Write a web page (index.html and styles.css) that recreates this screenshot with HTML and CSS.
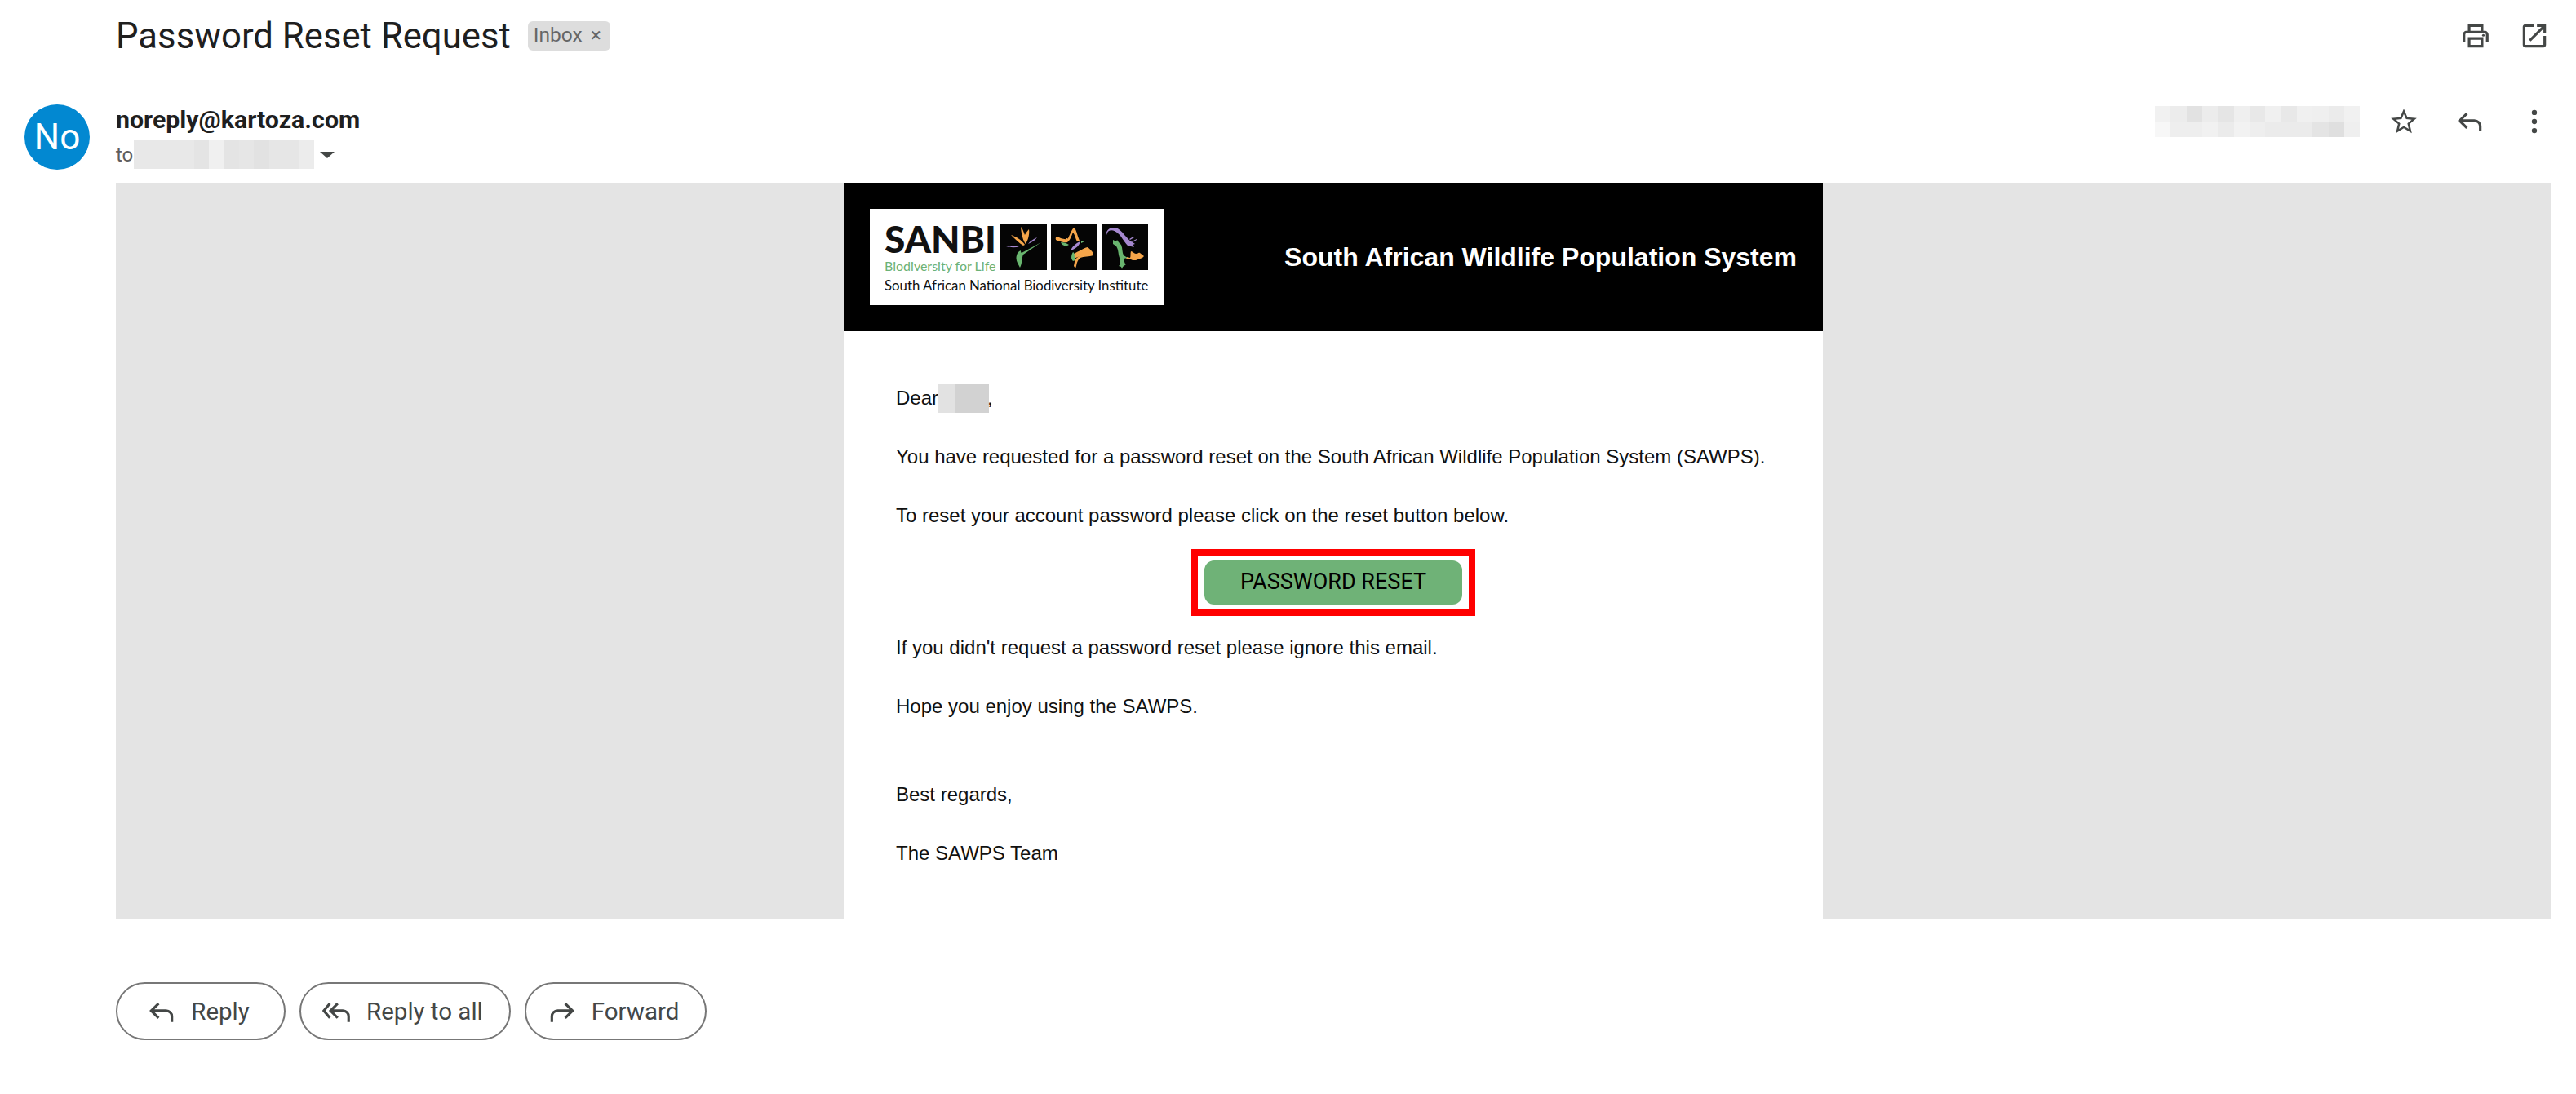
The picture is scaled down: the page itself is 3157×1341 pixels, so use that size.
FILE: index.html
```html
<!DOCTYPE html>
<html lang="en">
<head>
  <meta charset="utf-8">
  <title>Password Reset Request</title>
  <link rel="stylesheet" href="styles.css">
</head>
<body>
  <div class="page">
    <div class="subject">
      <h1>Password Reset Request</h1>
      <span class="chip">Inbox <span class="chip-x">×</span></span>
      <div class="subject-icons">
        <svg class="icon" viewBox="0 0 24 24"><path d="M19 8h-1V3H6v5H5c-1.66 0-3 1.34-3 3v6h4v4h12v-4h4v-6c0-1.66-1.34-3-3-3zM8 5h8v3H8V5zm8 14H8v-4h8v4zm2-2v-4H6v4H4v-6c0-.55.45-1 1-1h14c.55 0 1 .45 1 1v6h-2z"/><circle cx="18" cy="11.5" r="1"/></svg>
        <svg class="icon" viewBox="0 0 24 24"><path d="M19 19H5V5h7V3H5c-1.11 0-2 .9-2 2v14c0 1.1.89 2 2 2h14c1.1 0 2-.9 2-2v-7h-2v7zM14 3v2h3.59l-9.83 9.83 1.41 1.41L19 6.41V10h2V3h-7z"/></svg>
      </div>
    </div>

    <div class="message">
      <div class="avatar">No</div>
      <div class="message-main">
        <div class="sender-row">
          <div class="sender">
            <div class="sender-name">noreply@kartoza.com</div>
            <div class="sender-to">to<span class="blur-to"></span><span class="caret"></span></div>
          </div>
          <div class="sender-tools">
            <span class="blur-date"></span>
            <svg class="icon" viewBox="0 0 24 24"><path d="M22 9.24l-7.19-.62L12 2 9.19 8.63 2 9.24l5.46 4.73L5.82 21 12 17.27 18.18 21l-1.63-7.03L22 9.24zM12 15.4l-3.76 2.27 1-4.28-3.32-2.88 4.38-.38L12 6.1l1.71 4.04 4.38.38-3.32 2.88 1 4.28L12 15.4z"/></svg>
            <svg class="icon" viewBox="0 0 24 24"><path class="line" d="M9.7 5.7 4 11.3l5.7 5.6M4.6 11.3H15.500c2.500 0 4.500 2 4.500 4.500V19"/></svg>
            <svg class="icon" viewBox="0 0 24 24"><circle cx="12" cy="5" r="2"/><circle cx="12" cy="12" r="2"/><circle cx="12" cy="19" r="2"/></svg>
          </div>
        </div>

        <div class="mail-bg">
          <div class="mail">
            <div class="mail-head">
              <div class="logo">
                <div class="logo-top">
                  <div class="logo-words">
                    <div class="logo-name">SANBI</div>
                    <div class="logo-tag">Biodiversity for Life</div>
                  </div>
                  <svg class="logo-square" viewBox="0 0 57 57">
                    <path class="or" d="M25 4c3 3 4 8 5 10 1-2 3-5 5-7 1 6-1 13-4 18-1-1-5-7-6-21zM13 14c6 2 13 6 17 12l-2 1c-5-3-10-8-15-13z"/>
                    <path class="pu" d="M7 28c5-1 10-1 16 .5-5 1-11 1-16-.5zM45 17c-2 3-6 6-11 8 2-3 6-6 11-8z"/>
                    <path class="gr" d="M50 23 28 38c-2 4-1 11-4 16-2-4-6-9-4-15 1-4 3-5 5-6 0 2 0 2 1 3z"/>
                  </svg>
                  <svg class="logo-square" viewBox="0 0 57 57">
                    <path class="or" d="M6 17c2-2 4 0 6 1 4 1 7 2 9 0 2-4 4-10 7-13 3 1 4 9 7 16l-3 1c-2-4-3-9-5-11-2 4-3 9-7 12-4 1-8-1-11-2-2 0-4-1-3-4zM26 44c-1-3 0-6 4-8 6-3 12-7 15-7 5 4 8 8 7 10-5 2-12 1-16 3-3 2-4 5-5 10l-1 3-2-3 1-5 1-3c1-2 3-3 5-4z"/>
                    <path class="pu" d="M24 33c2-5 7-9 12-11-1 5-6 9-12 11z"/>
                    <path class="gr" d="M12 23c4 0 7 1 10 3-3 2-8 2-10-3zM27 35c3 2 1 6 3 10l-3 1c-3-3-2-8 0-11zM37 22l6-1-6 3z"/>
                  </svg>
                  <svg class="logo-square" viewBox="0 0 57 57">
                    <path class="pu" d="M6 14c-1-5 3-9 9-9 6 0 10 5 14 10 3 3 4 5 9 8l3 2-3 1 2 3-8-2c-5-5-7-11-12-15-3-3-8-5-11-3-2 1-2 3-3 5z"/>
                    <path class="pu" d="m34 19 5-3 1 1-5 3zm3 3 6-3v1l-5 3z"/>
                    <path class="or" d="M36 34c2 0 4 3 6 3 3 0 3-2 5-1l5 4-2 2-8 3c-3 0-5 0-6-1l-6-1 1-2 4 1c1-2 0-5 1-8z"/>
                    <path class="gr" d="M14 20l4 2 1-2 2 3 3 3c2 5 1 9 3 13l5 3-5 1c1 3 1 6 3 7l-4 3-1 3-1-3-3-1 2-2-1-8c-2-5-1-12-5-15l-3-2z"/>
                  </svg>
                </div>
                <div class="logo-full">South African National Biodiversity Institute</div>
              </div>
              <div class="mail-title">South African Wildlife Population System</div>
            </div>

            <div class="mail-body">
              <p>Dear<span class="blur-name"></span>,</p>
              <p>You have requested for a password reset on the South African Wildlife Population System (SAWPS).</p>
              <p>To reset your account password please click on the reset button below.</p>
              <div class="cta-row">
                <div class="cta-mark"><a class="cta" href="#">PASSWORD RESET</a></div>
              </div>
              <p>If you didn't request a password reset please ignore this email.</p>
              <p>Hope you enjoy using the SAWPS.</p>
              <p class="regards">Best regards,</p>
              <p>The SAWPS Team</p>
            </div>
          </div>
        </div>

        <div class="reply-row">
          <a class="reply-btn" href="#">
            <svg class="btn-icon" viewBox="0 0 24 24"><path class="line" d="M9.700 5.700 4 11.300l5.700 5.600M4.600 11.300H15.500c2.500 0 4.500 2 4.500 4.500V20"/></svg>
            Reply
          </a>
          <a class="reply-btn" href="#">
            <svg class="btn-icon" viewBox="0 0 24 24"><path class="line" d="M6.500 5.700 1.800 11.300l4.700 5.600M12.500 5.700 7 11.300l5.500 5.600M7.600 11.300h8.900c2.500 0 4.500 2 4.500 4.500V20"/></svg>
            Reply to all
          </a>
          <a class="reply-btn" href="#">
            <svg class="btn-icon" viewBox="0 0 24 24"><path class="line" d="M14.300 5.700 20 11.300l-5.700 5.600M19.400 11.300H8.500C6 11.300 4 13.300 4 15.800V20"/></svg>
            Forward
          </a>
        </div>
      </div>
    </div>
  </div>
</body>
</html>
```

FILE: styles.css
```css
* {
  box-sizing: border-box;
}
body {
  margin: 0;
  background: #fff;
  font-family: Roboto, "Noto Sans", sans-serif;
  color: #1f1f1f;
}
.page {
  padding: 0 31px 0 30px;
}
.icon {
  width: 38px;
  height: 38px;
  fill: #444746;
}
.line {
  fill: none;
  stroke: #444746;
  stroke-width: 2;
}

/* subject line */
.subject {
  display: flex;
  align-items: center;
  height: 88px;
  margin-left: 112px;
  margin-bottom: 40px;
}
.subject h1 {
  margin: 0;
  font-size: 43.700px;
  font-weight: 400;
  color: #1f1f1f;
}
.chip {
  margin-left: 21px;
  padding: 0 11px 0 7px;
  height: 36px;
  line-height: 34px;
  background: #ddd;
  border-radius: 6px;
  font-size: 24.500px;
  color: #666;
}
.chip-x {
  margin-left: 4px;
}
.subject-icons {
  margin-left: auto;
  display: flex;
  gap: 34px;
  padding-right: 1px;
}

/* sender */
.message {
  display: grid;
  grid-template-columns: 112px 1fr;
}
.avatar {
  width: 80px;
  height: 80px;
  border-radius: 50%;
  background: #0288d1;
  color: #fff;
  font-size: 44px;
  line-height: 80px;
  text-align: center;
}
.sender-row {
  display: flex;
  justify-content: space-between;
  height: 96px;
}
.sender-name {
  font-size: 30.300px;
  font-weight: 700;
  line-height: 34px;
  padding-top: 2px;
}
.sender-to {
  display: flex;
  align-items: center;
  margin-top: 8px;
  font-size: 24px;
  color: #5e5e5e;
}
.blur-to {
  width: 221px;
  height: 35px;
  margin-left: 1px;
  background: linear-gradient(90deg, #e8e8e8 0 74px, #e4e4e4 74px 92px, #f0f0f0 92px 111px, #e4e4e4 111px 129px, #e6e6e6 129px 147px, #e2e2e2 147px 166px, #e6e6e6 166px 203px, #ececec 203px);
}
.caret {
  width: 0;
  height: 0;
  margin-left: 7px;
  border-left: 9px solid transparent;
  border-right: 9px solid transparent;
  border-top: 8px solid #444746;
}
.sender-tools {
  display: flex;
  align-items: center;
  height: 42px;
  padding-right: 1px;
}
.sender-tools .icon:nth-of-type(1) {
  margin-left: 35px;
}
.sender-tools .icon:nth-of-type(2) {
  margin-left: 43px;
}
.sender-tools .icon:nth-of-type(3) {
  margin-left: 41px;
}
.blur-date {
  width: 251px;
  height: 38px;
  background:
    linear-gradient(90deg, #f1f1f1 0 19px, #ececec 19px 39px, #e2e2e2 39px 58px, #ececec 58px 77px, #e5e5e5 77px 97px, #efefef 97px 116px, #e8e8e8 116px 135px, #f0f0f0 135px 155px, #e8e8e8 155px 174px, #f0f0f0 174px 193px, #efefef 193px 213px, #ebebeb 213px 232px, #f1f1f1 232px) top / 100% 50% no-repeat,
    linear-gradient(90deg, #f7f7f7 0 19px, #eeeeee 19px 58px, #f1f1f1 58px 77px, #ebebeb 77px 97px, #f2f2f2 97px 116px, #eeeeee 116px 135px, #ebebeb 135px 193px, #e4e4e4 193px 213px, #dfdfdf 213px 232px, #efefef 232px) bottom / 100% 50% no-repeat;
}

/* the email itself */
.mail-bg {
  display: flex;
  justify-content: center;
  height: 903px;
  background: #e4e4e4;
}
.mail {
  width: 1200px;
  background: #fff;
}
.mail-head {
  display: flex;
  align-items: center;
  justify-content: space-between;
  height: 182px;
  padding: 0 32px;
  background: #000;
}
.logo {
  width: 360px;
  height: 118px;
  padding: 18px 18px 0;
  background: #fff;
}
.logo-top {
  display: flex;
  height: 57px;
}
.logo-words {
  width: 142px;
  font-family: Lato, sans-serif;
}
.logo-name {
  font-size: 46px;
  font-weight: 900;
  line-height: 38px;
  color: #111;
}
.logo-tag {
  margin-top: 4px;
  font-size: 16px;
  line-height: 20px;
  color: #6cb276;
  white-space: nowrap;
}
.logo-square {
  width: 57px;
  height: 57px;
  margin-left: 5px;
  background: #050505;
}
.logo-words + .logo-square {
  margin-left: 0;
}
.or { fill: #f5a54a; }
.pu { fill: #a588cf; }
.gr { fill: #69b56f; }
.logo-full {
  margin-top: 7px;
  font-family: Lato, sans-serif;
  font-size: 16.800px;
  line-height: 24px;
  color: #111;
  white-space: nowrap;
}
.mail-title {
  font-family: "Liberation Sans", Arial, sans-serif;
  font-size: 32px;
  font-weight: 700;
  color: #fff;
}
.mail-body {
  padding: 64px 64px 0;
  font-family: "Liberation Sans", Arial, sans-serif;
  font-size: 24px;
  line-height: 36px;
  color: #111;
}
.mail-body p {
  margin: 0 0 36px;
  white-space: nowrap;
}
.blur-name {
  display: inline-block;
  width: 62px;
  height: 35px;
  margin-right: -2px;
  vertical-align: -10px;
  background: linear-gradient(90deg, #e2e2e2 0 21px, #d2d2d2 21px);
}
.cta-row {
  display: flex;
  justify-content: center;
  margin: -13px 0 21px;
}
.cta-mark {
  padding: 6px 8px;
  border: 8px solid #f00;
}
.cta {
  display: block;
  width: 316px;
  height: 54px;
  border-radius: 12px;
  background: #6fb277;
  color: #000;
  font-family: Roboto, sans-serif;
  font-size: 27px;
  line-height: 52px;
  text-align: center;
  text-decoration: none;
}
.regards {
  padding-top: 36px;
}

/* bottom buttons */
.reply-row {
  display: flex;
  gap: 17px;
  margin-top: 77px;
}
.reply-btn {
  display: flex;
  align-items: center;
  justify-content: center;
  min-width: 208px;
  height: 71px;
  padding: 0 32px 0 25px;
  border: 2px solid #777;
  border-radius: 36px;
  color: #444746;
  font-size: 29.500px;
  text-decoration: none;
}
.btn-icon {
  width: 38px;
  height: 38px;
  margin-right: 17px;
}
```
